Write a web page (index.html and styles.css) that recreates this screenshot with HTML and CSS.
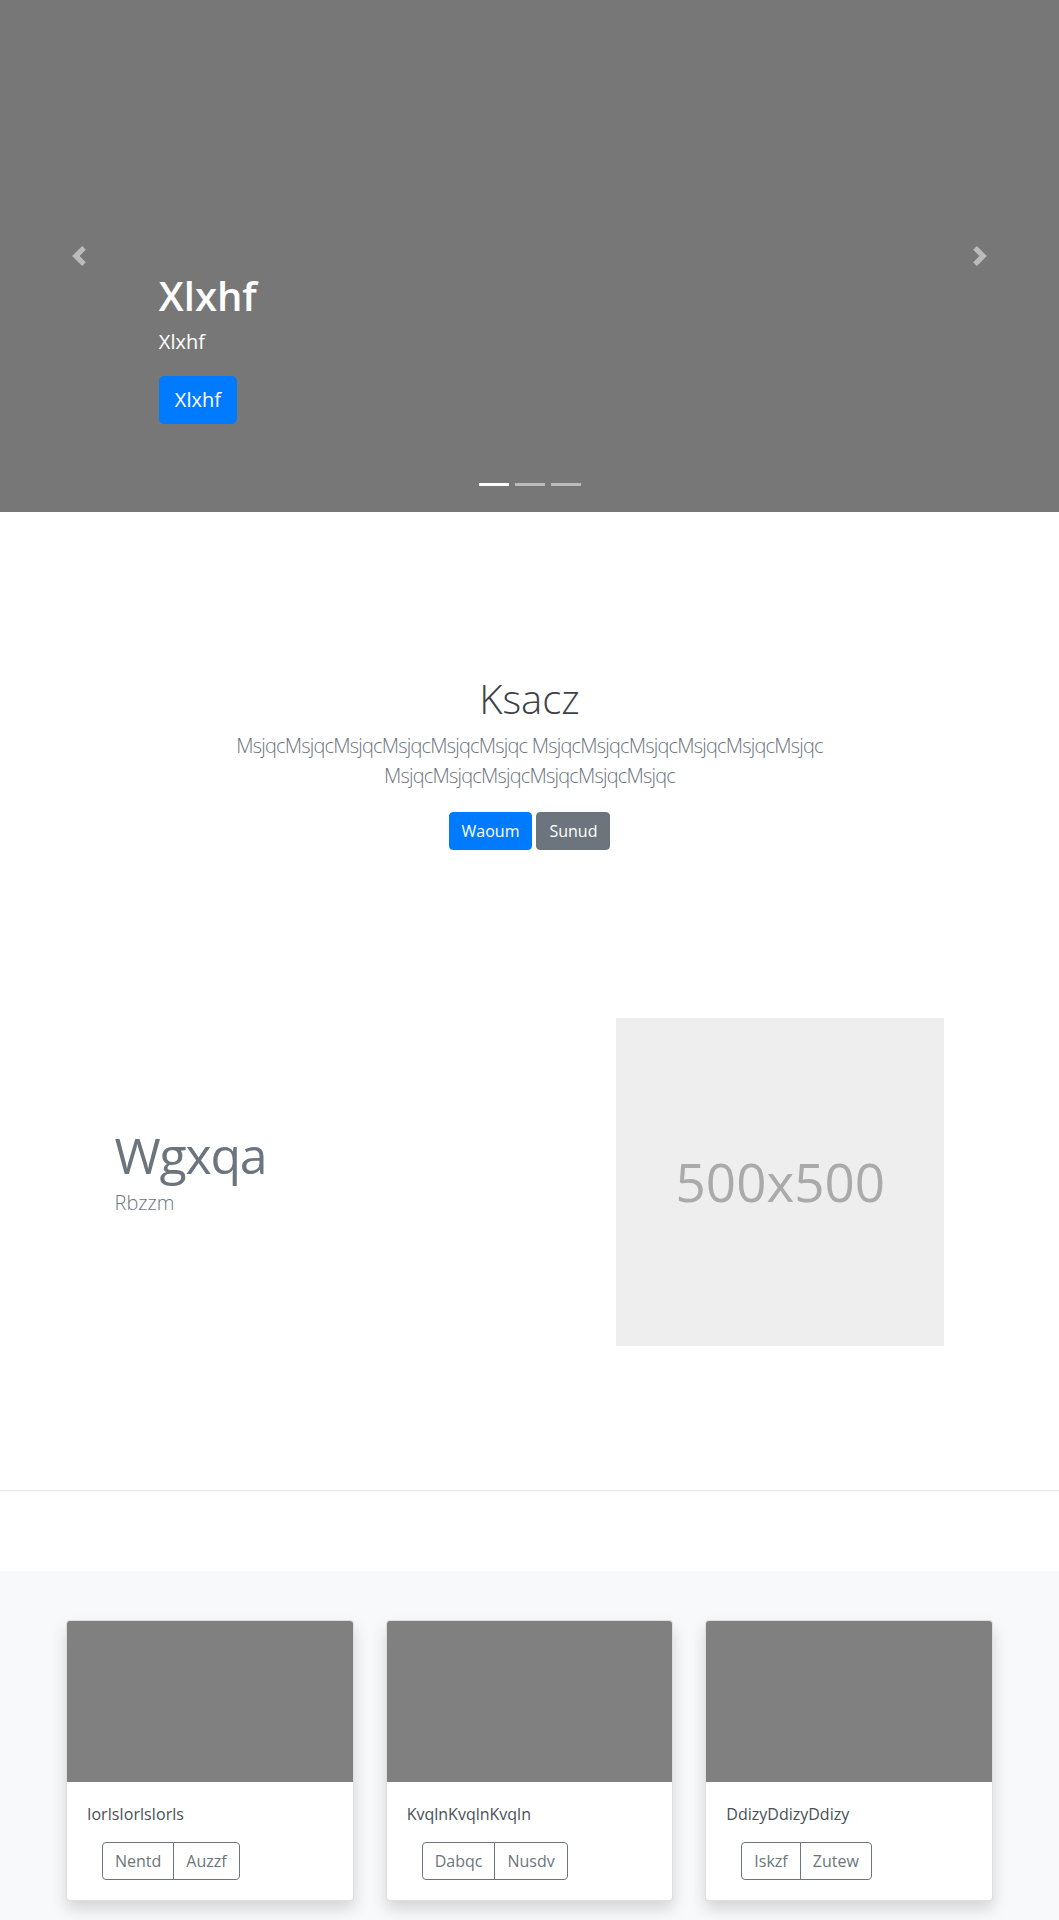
FILE: index.html
```html
<!DOCTYPE html>
<html lang="en">
<head>
<meta charset="utf-8">
<title>Xlxhf</title>
<link rel="stylesheet" href="styles.css">
</head>
<body>
<main>
  <div class="carousel">
    <div class="carousel-caption">
      <h1 class="caption-title">Xlxhf</h1>
      <p class="caption-text">Xlxhf</p>
      <a class="btn btn-lg btn-primary" href="#">Xlxhf</a>
    </div>
    <a class="carousel-control control-prev" href="#" aria-label="Previous">
      <svg class="control-icon" width="20" height="20" viewBox="0 0 8 8" fill="#fff"><path d="M5.25 0l-4 4 4 4 1.5-1.5L4.25 4l2.5-2.5L5.25 0z"/></svg>
    </a>
    <a class="carousel-control control-next" href="#" aria-label="Next">
      <svg class="control-icon" width="20" height="20" viewBox="0 0 8 8" fill="#fff"><path d="M2.75 0l-1.5 1.5L3.75 4l-2.5 2.5L2.75 8l4-4-4-4z"/></svg>
    </a>
    <ol class="carousel-indicators">
      <li class="indicator active"></li>
      <li class="indicator"></li>
      <li class="indicator"></li>
    </ol>
  </div>

  <section class="jumbotron">
    <h1 class="jumbotron-heading">Ksacz</h1>
    <p class="lead lead-center">MsjqcMsjqcMsjqcMsjqcMsjqcMsjqc MsjqcMsjqcMsjqcMsjqcMsjqcMsjqc MsjqcMsjqcMsjqcMsjqcMsjqcMsjqc</p>
    <div class="jumbotron-actions">
      <a class="btn btn-primary" href="#">Waoum</a>
      <a class="btn btn-secondary" href="#">Sunud</a>
    </div>
  </section>

  <section class="featurette">
    <div class="featurette-text">
      <h2 class="featurette-heading">Wgxqa</h2>
      <p class="lead featurette-lead">Rbzzm</p>
    </div>
    <div class="featurette-media">
      <div class="placeholder">500x500</div>
    </div>
  </section>

  <hr class="divider">

  <section class="album">
    <div class="card-deck">
      <div class="card">
        <div class="card-img"></div>
        <div class="card-body">
          <p class="card-text">IorlsIorlsIorls</p>
          <div class="btn-group">
            <a class="btn btn-outline" href="#">Nentd</a>
            <a class="btn btn-outline" href="#">Auzzf</a>
          </div>
        </div>
      </div>
      <div class="card">
        <div class="card-img"></div>
        <div class="card-body">
          <p class="card-text">KvqlnKvqlnKvqln</p>
          <div class="btn-group">
            <a class="btn btn-outline" href="#">Dabqc</a>
            <a class="btn btn-outline" href="#">Nusdv</a>
          </div>
        </div>
      </div>
      <div class="card">
        <div class="card-img"></div>
        <div class="card-body">
          <p class="card-text">DdizyDdizyDdizy</p>
          <div class="btn-group">
            <a class="btn btn-outline" href="#">Iskzf</a>
            <a class="btn btn-outline" href="#">Zutew</a>
          </div>
        </div>
      </div>
    </div>
  </section>
</main>
</body>
</html>
```

FILE: styles.css
```css
* { box-sizing: border-box; }

html, body {
  margin: 0;
  padding: 0;
}

body {
  font-family: "Open Sans", "Noto Sans", "Liberation Sans", sans-serif;
  font-size: 16px;
  line-height: 1.5;
  color: #212529;
  background: #fff;
}

/* Buttons */
.btn {
  display: inline-block;
  font-size: 16px;
  line-height: 24px;
  font-weight: 400;
  padding: 6px 12px;
  border: 1px solid transparent;
  border-radius: 4px;
  text-decoration: none;
  text-align: center;
  white-space: nowrap;
}
.btn-lg {
  font-size: 20px;
  line-height: 30px;
  padding: 8px 15px;
  border-radius: 5px;
}
.btn-primary { background: #007bff; border-color: #007bff; color: #fff; }
.btn-secondary { background: #6c757d; border-color: #6c757d; color: #fff; }
.btn-outline { background: transparent; border-color: #6c757d; color: #6c757d; }

/* Carousel */
.carousel {
  position: relative;
  height: 512px;
  background: #777;
  display: flex;
  align-items: flex-end;
  padding: 0 15% 88px;
}
.carousel-caption {
  color: #fff;
  position: relative;
  z-index: 2;
}
.caption-title {
  font-size: 40px;
  font-weight: 600;
  line-height: 1.2;
  margin: 0 0 7px;
}
.caption-text {
  font-size: 20px;
  line-height: 30px;
  margin: 0 0 19px;
}
.carousel-control {
  position: absolute;
  top: 0;
  bottom: 0;
  width: 15%;
  display: flex;
  align-items: center;
  justify-content: center;
  opacity: .5;
  z-index: 1;
}
.control-prev { left: 0; }
.control-next { right: 0; }
.control-icon { display: block; }
.carousel-indicators {
  position: absolute;
  left: 0;
  right: 0;
  bottom: 0;
  display: flex;
  justify-content: center;
  list-style: none;
  margin: 0 0 16px;
  padding: 0;
  z-index: 3;
}
.indicator {
  width: 30px;
  height: 23px;
  margin: 0 3px;
  border-top: 10px solid transparent;
  border-bottom: 10px solid transparent;
  background: #fff;
  background-clip: padding-box;
  opacity: .5;
}
.indicator.active { opacity: 1; }

/* Jumbotron */
.jumbotron {
  text-align: center;
  padding: 163px 15px 0;
}
.jumbotron-heading {
  font-size: 40px;
  font-weight: 300;
  line-height: 1.2;
  color: #3d4146;
  margin: 0 0 8px;
}
.lead {
  font-size: 20px;
  font-weight: 300;
  line-height: 30px;
  color: #6c757d;
}
.lead-center {
  max-width: 610px;
  margin: 0 auto;
  letter-spacing: -0.8px;
}
.jumbotron-actions {
  display: flex;
  justify-content: center;
  gap: 4px;
  margin-top: 21px;
}

/* Featurette */
.featurette {
  max-width: 860px;
  margin: 0 auto;
  display: grid;
  grid-template-columns: 7fr 5fr;
  align-items: center;
  padding: 168px 0 64px;
}
.featurette-text { padding: 0 15px; }
.featurette-heading {
  font-size: 50px;
  font-weight: 400;
  line-height: 1;
  letter-spacing: -1.2px;
  color: #6c757d;
  margin: 0 0 8px;
}
.featurette-lead { margin: 0 0 16px; }
.featurette-media { padding: 0 15px; }
.placeholder {
  width: 100%;
  aspect-ratio: 1 / 1;
  background: #eee;
  color: #aaa;
  font-size: 53px;
  display: flex;
  align-items: center;
  justify-content: center;
}

.divider {
  border: 0;
  border-top: 1px solid rgba(0, 0, 0, .1);
  height: 0;
  margin: 80px 0;
}

/* Album */
.album {
  background: #f8f9fa;
  padding: 49px 0 48px;
}
.card-deck {
  max-width: 927px;
  margin: 0 auto;
  display: grid;
  grid-template-columns: repeat(3, 1fr);
  gap: 32px;
}
.card {
  background: #fff;
  border: 1px solid rgba(0, 0, 0, .125);
  border-radius: 4px;
  box-shadow: 0 8px 16px rgba(0, 0, 0, .15);
  overflow: hidden;
}
.card-img {
  height: 161px;
  background: #808080;
}
.card-body { padding: 20px; }
.card-text { margin: 0 0 16px; color: #495057; }
.btn-group {
  display: inline-flex;
  margin-left: 15px;
}
.btn-group .btn + .btn { margin-left: -1px; }
.btn-group .btn:first-child { border-top-right-radius: 0; border-bottom-right-radius: 0; }
.btn-group .btn:last-child { border-top-left-radius: 0; border-bottom-left-radius: 0; }
```
